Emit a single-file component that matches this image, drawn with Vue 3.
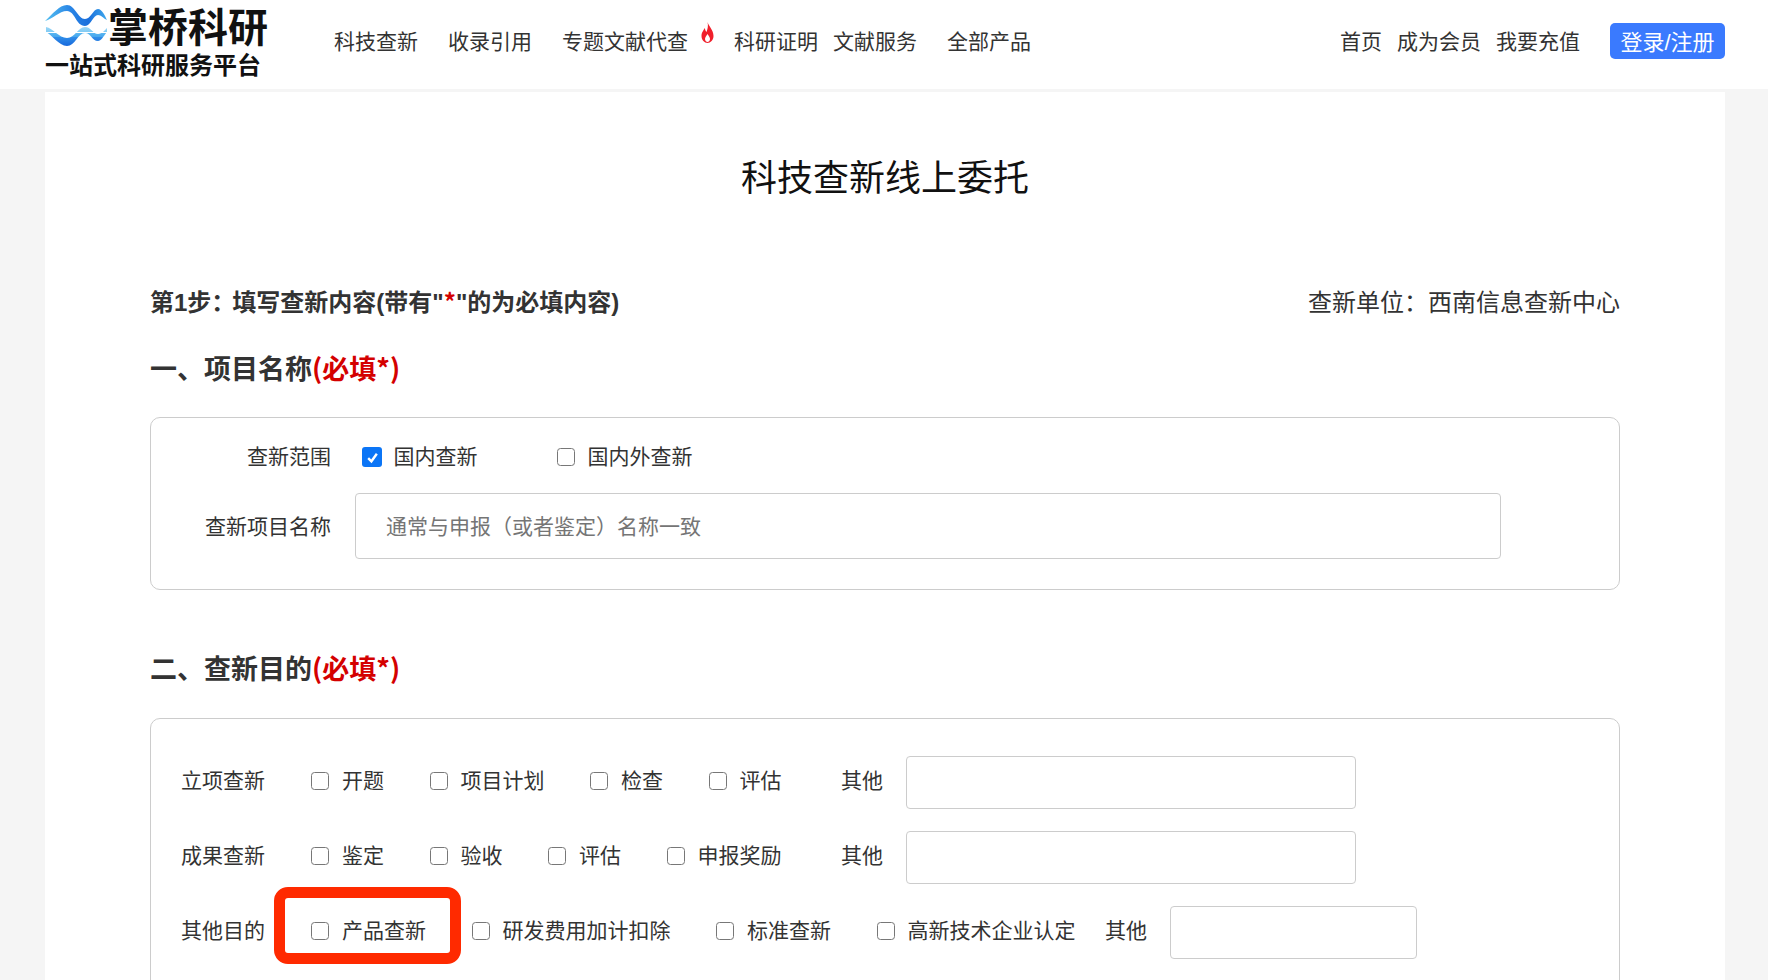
<template>
  <div class="page">
    <header class="topbar">
      <div class="logo">
        <div class="logo-top">
          <svg class="wave" width="62" height="41" viewBox="0 0 62 41">
            <defs>
              <linearGradient id="waveTop" x1="0" y1="0" x2="1" y2="0">
                <stop offset="0" stop-color="#55c0f0" />
                <stop offset="0.4" stop-color="#2a86e6" />
                <stop offset="0.7" stop-color="#1a6fdc" />
                <stop offset="1" stop-color="#3ea8ec" />
              </linearGradient>
              <linearGradient id="waveLow" gradientUnits="userSpaceOnUse" x1="0" y1="22" x2="0" y2="41">
                <stop offset="0" stop-color="#9ad6f6" />
                <stop offset="0.24" stop-color="#84ccf4" />
                <stop offset="0.24" stop-color="#fff" />
                <stop offset="0.29" stop-color="#fff" />
                <stop offset="0.29" stop-color="#5cb8f0" />
                <stop offset="0.5" stop-color="#48a8ee" />
                <stop offset="0.5" stop-color="#fff" />
                <stop offset="0.55" stop-color="#fff" />
                <stop offset="0.55" stop-color="#2f8ce8" />
                <stop offset="1" stop-color="#1668dc" />
              </linearGradient>
            </defs>
            <path d="M0 16 C8 9 14 0 22 0 C30 0 33 14 40 14 C46 14 48 4 53 4 C57 4 60 11 62 15 C58 13 56 10 53 10 C48 10 46 21 40 21 C31 21 30 6 22 6 C14 6 8 14 0 16 Z" fill="url(#waveTop)" />
            <path d="M1 22 C8 23 14 33 22 33 C30 33 33 22 40 22 C46 22 48 29 53 29 C57 29 60 25 62 23 L62 27 C58 32 56 36 53 36 C47 36 46 28 40 28 C33 28 30 41 22 41 C14 41 6 29 1 27 Z" fill="url(#waveLow)" />
          </svg>
          <span class="logo-name">掌桥科研</span>
        </div>
        <div class="logo-sub">一站式科研服务平台</div>
      </div>

      <nav class="main-nav">
        <a class="nav-a" style="width: 114px">科技查新</a>
        <a class="nav-a" style="width: 114px">收录引用</a>
        <a class="nav-a hot" style="width: 172px">专题文献代查
          <svg class="flame" width="15" height="22" viewBox="0 0 14 22">
            <path d="M7 0 C8 4 13 8 13 14 C13 18 10 21 7 21 C4 21 1 18 1 14 C1 10 3 9 4 6 C5 8 5 9 6 10 C7 7 8 4 7 0 Z M7 12 C6 14 4.500 15 4.500 17 C4.500 19 6 20 7 20 C8 20 9.500 19 9.500 17 C9.500 15 8 14 7 12 Z" fill="#f0202c" fill-rule="evenodd" />
          </svg>
        </a>
        <a class="nav-a" style="width: 99px">科研证明</a>
        <a class="nav-a" style="width: 114px">文献服务</a>
        <a class="nav-a">全部产品</a>
      </nav>

      <div class="right-nav">
        <a class="nav-a">首页</a>
        <a class="nav-a">成为会员</a>
        <a class="nav-a">我要充值</a>
        <button class="login">登录/注册</button>
      </div>
    </header>

    <main class="content">
      <h1 class="title">科技查新线上委托</h1>

      <div class="step-row">
        <div class="step">第1步<span class="tight">：</span>填写查新内容(带有"<span class="red star">*</span>"的为必填内容)</div>
        <div class="unit">查新单位：西南信息查新中心</div>
      </div>

      <h2 class="sec-title first">一、项目名称<span class="red">(必填*)</span></h2>
      <section class="box box-name">
        <div class="range-row">
          <span class="row-label wide">查新范围</span>
          <label class="check first-check"><span class="cb on">
            <svg width="13" height="13" viewBox="0 0 12 12"><path d="M2 6.500 L5 9.500 L10 2.500" fill="none" stroke="#fff" stroke-width="2.200" /></svg>
          </span>国内查新</label>
          <label class="check"><span class="cb"></span>国内外查新</label>
        </div>
        <div class="name-row">
          <span class="row-label wide">查新项目名称</span>
          <input class="name-input" type="text" placeholder="通常与申报（或者鉴定）名称一致" />
        </div>
      </section>

      <h2 class="sec-title second">二、查新目的<span class="red">(必填*)</span></h2>
      <section class="box box-purpose">
        <div v-for="row in rows" :key="row.label" class="purpose-row" :class="row.rowClass">
          <span class="row-label">{{ row.label }}</span>
          <div class="opts">
            <label v-for="opt in row.options" :key="opt" class="check" :class="{ marked: opt === '产品查新' }">
              <span class="cb"></span>{{ opt }}
            </label>
          </div>
          <span class="other">其他</span>
          <input class="other-input" type="text" />
        </div>
      </section>
    </main>
  </div>
</template>

<script setup>
const rows = [
  { label: '立项查新', options: ['开题', '项目计划', '检查', '评估'], rowClass: 'long' },
  { label: '成果查新', options: ['鉴定', '验收', '评估', '申报奖励'], rowClass: 'long' },
  { label: '其他目的', options: ['产品查新', '研发费用加计扣除', '标准查新', '高新技术企业认定'], rowClass: 'short' }
]
</script>

<style>
html, body {
  margin: 0;
  height: 100%;
  overflow: hidden;
  background: #f5f5f5;
}
</style>

<style scoped>
.page {
  font-family: "Liberation Sans", "Noto Sans CJK SC", sans-serif;
  color: #333;
  height: 980px;
  overflow: hidden;
}

.topbar {
  height: 89px;
  background: #fff;
  display: flex;
  align-items: center;
  padding: 0 43px 0 45px;
}

.logo {
  width: 289px;
  flex-shrink: 0;
  margin-top: -4px;
}

.logo-top {
  display: flex;
  align-items: center;
  height: 47px;
}

.wave {
  flex-shrink: 0;
  margin-top: -4px;
  margin-right: 1px;
}

.logo-name {
  font-size: 40px;
  font-weight: 700;
  color: #111;
  line-height: 44px;
  white-space: nowrap;
}

.logo-sub {
  font-size: 24px;
  font-weight: 700;
  color: #111;
  line-height: 30px;
}

.main-nav {
  display: flex;
  align-items: center;
  margin-top: -10px;
}

.nav-a {
  font-size: 21px;
  color: #333;
  white-space: nowrap;
  flex-shrink: 0;
}

.hot {
  position: relative;
}

.flame {
  position: absolute;
  left: 138px;
  top: -3px;
}

.right-nav {
  margin-left: auto;
  display: flex;
  align-items: center;
  gap: 15px;
  margin-top: -8px;
}

.right-nav .nav-a {
  margin-bottom: 2px;
}

.login {
  margin-left: 15px;
  width: 115px;
  height: 36px;
  background: #3a7afe;
  color: #fff;
  border: none;
  border-radius: 5px;
  font-family: inherit;
  font-size: 22px;
  padding: 0 0 2px;
}

.content {
  width: 1470px;
  margin: 3px 0 0 45px;
  padding: 0 105px;
  background: #fff;
  height: 888px;
}

.title {
  margin: 0;
  padding-top: 61px;
  text-align: center;
  font-size: 36px;
  font-weight: 400;
  color: #111;
  line-height: 52px;
}

.step-row {
  display: flex;
  justify-content: space-between;
  align-items: center;
  margin-top: 79px;
  height: 32px;
}

.step {
  font-size: 24px;
  font-weight: 700;
  color: #333;
}

.tight {
  letter-spacing: -3px;
}

.star {
  font-family: "Noto Sans CJK SC", sans-serif;
}

.unit {
  font-size: 24px;
  color: #333;
}

.red {
  color: #d40000;
}

.sec-title {
  margin: 0;
  font-family: "Noto Sans CJK SC", sans-serif;
  font-size: 27px;
  font-weight: 700;
  color: #333;
  line-height: 38px;
}

.sec-title.first {
  margin-top: 33px;
}

.sec-title.second {
  margin-top: 59px;
}

.box {
  border: 1px solid #ccc;
  border-radius: 10px;
  background: #fff;
}

.box-name {
  margin-top: 30px;
  height: 173px;
  box-sizing: border-box;
}

.range-row {
  display: flex;
  align-items: center;
  height: 75px;
  box-sizing: border-box;
  padding-bottom: 2px;
}

.row-label {
  font-size: 21px;
  color: #333;
  white-space: nowrap;
}

.row-label.wide {
  width: 180px;
  text-align: right;
  flex-shrink: 0;
}

.name-row .row-label {
  margin-bottom: 2px;
}

.check {
  display: flex;
  align-items: center;
  font-size: 21px;
  color: #333;
  white-space: nowrap;
}

.first-check {
  margin-left: 31px;
  margin-right: 79px;
}

.cb {
  width: 18px;
  height: 18px;
  border: 1.500px solid #777;
  border-radius: 3.500px;
  background: #fff;
  margin-right: 13px;
  margin-top: 5px;
  box-sizing: border-box;
  flex-shrink: 0;
  display: flex;
  align-items: center;
  justify-content: center;
}

.cb.on {
  width: 20px;
  height: 20px;
  border: none;
  background: #0b75f6;
  margin-right: 11.500px;
  border-radius: 3px;
}

.name-row {
  display: flex;
  align-items: center;
}

.name-input {
  margin-left: 24px;
  width: 1146px;
  height: 66px;
  box-sizing: border-box;
  border: 1px solid #ccc;
  border-radius: 4px;
  padding: 2px 30px 0;
  font-family: inherit;
  font-size: 21px;
  color: #333;
  outline: none;
}

.name-input::placeholder {
  color: #757575;
}

.box-purpose {
  margin-top: 31px;
  height: 400px;
  box-sizing: border-box;
  padding-top: 37px;
}

.purpose-row {
  display: flex;
  align-items: center;
  height: 53px;
  margin-bottom: 22px;
  padding-left: 30px;
}

.purpose-row .row-label,
.purpose-row .opts,
.purpose-row .other {
  margin-bottom: 8px;
}

.opts {
  display: flex;
  align-items: center;
  margin-left: 46px;
  gap: 45.500px;
}

.marked {
  position: relative;
}

.marked::after {
  content: "";
  position: absolute;
  left: -37px;
  right: -35px;
  top: -27px;
  bottom: -20px;
  border: 11px solid #ff2a00;
  border-radius: 14px;
  pointer-events: none;
}

.other {
  font-size: 21px;
  color: #333;
  margin-left: 59.500px;
  white-space: nowrap;
}

.short .other {
  margin-left: 29.500px;
}

.other-input {
  height: 53px;
  box-sizing: border-box;
  border: 1px solid #ccc;
  border-radius: 4px;
  margin-left: 23px;
  outline: none;
}

.long .other-input {
  width: 450px;
}

.short .other-input {
  width: 247px;
}
</style>
